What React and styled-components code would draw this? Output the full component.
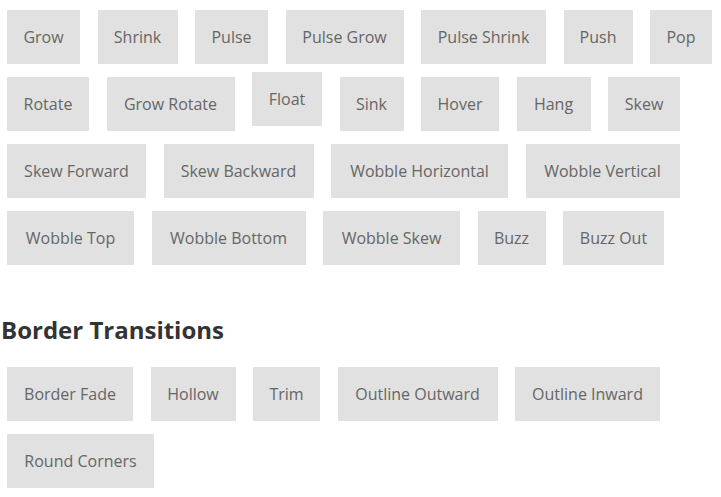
import React from "react";
import styled, { createGlobalStyle } from "styled-components";

const Global = createGlobalStyle`
  html, body { margin: 0; padding: 0; background: #fff; }
  body { font-family: "Open Sans", "Noto Sans", sans-serif; }
`;

const Page = styled.div`
  padding: 10px 0 0 7px;
  display: flex;
  flex-direction: column;
`;

const Section = styled.div`
  display: flex;
  flex-direction: column;
  gap: 13px;
`;

const Row = styled.div`
  display: flex;
  gap: 17.5px;
`;

const Button = styled.div`
  flex: none;
  width: ${(p) => p.$w}px;
  height: 54px;
  box-sizing: border-box;
  display: flex;
  align-items: center;
  justify-content: center;
  background: #e1e1e1;
  color: #666;
  font-size: 16px;
  white-space: nowrap;
  transform: ${(p) => (p.$lift ? `translateY(-${p.$lift}px)` : "none")};
`;

const Heading = styled.h2`
  margin: 49px 0 21px -6px;
  font-size: 24px;
  line-height: 32px;
  font-weight: 700;
  color: #333;
  font-family: "Open Sans", "Noto Sans", sans-serif;
`;

const rows = [
  [["Grow", 73], ["Shrink", 80], ["Pulse", 73], ["Pulse Grow", 118], ["Pulse Shrink", 125], ["Push", 69], ["Pop", 62]],
  [["Rotate", 82], ["Grow Rotate", 128], ["Float", 70], ["Sink", 64], ["Hover", 78], ["Hang", 74], ["Skew", 72]],
  [["Skew Forward", 139], ["Skew Backward", 150], ["Wobble Horizontal", 177], ["Wobble Vertical", 154]],
  [["Wobble Top", 127], ["Wobble Bottom", 154], ["Wobble Skew", 137], ["Buzz", 68], ["Buzz Out", 101]],
];

const borderRows = [
  [["Border Fade", 126], ["Hollow", 85], ["Trim", 67], ["Outline Outward", 160], ["Outline Inward", 145]],
  [["Round Corners", 147]],
];

const lifts = { Float: 5 };

function Rows({ data }) {
  return (
    <Section>
      {data.map((r, i) => (
        <Row key={i}>
          {r.map(([t, w]) => (
            <Button key={t} $w={w} $lift={lifts[t]}>
              {t}
            </Button>
          ))}
        </Row>
      ))}
    </Section>
  );
}

export default function App() {
  return (
    <Page>
      <Global />
      <Rows data={rows} />
      <Heading>Border Transitions</Heading>
      <Rows data={borderRows} />
    </Page>
  );
}
